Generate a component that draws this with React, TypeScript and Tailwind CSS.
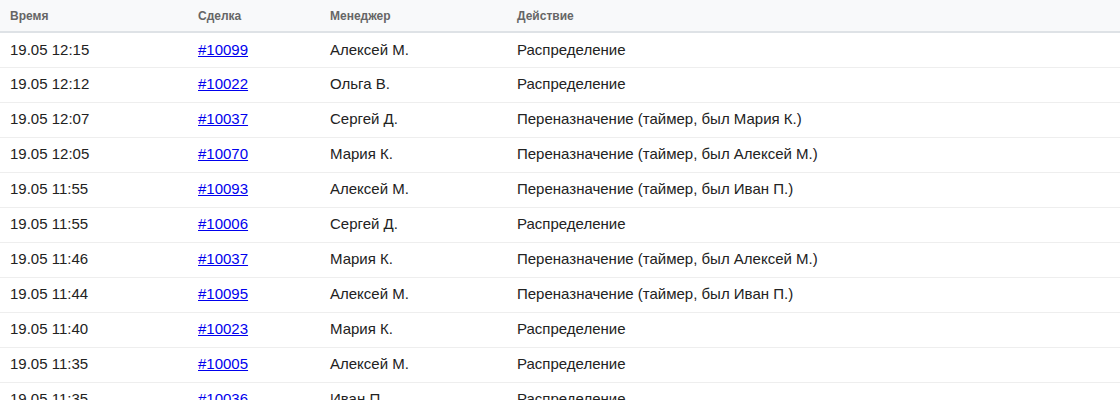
const rows: [string, string, string, string][] = [
  ['19.05 12:15', '#10099', 'Алексей М.', 'Распределение'],
  ['19.05 12:12', '#10022', 'Ольга В.', 'Распределение'],
  ['19.05 12:07', '#10037', 'Сергей Д.', 'Переназначение (таймер, был Мария К.)'],
  ['19.05 12:05', '#10070', 'Мария К.', 'Переназначение (таймер, был Алексей М.)'],
  ['19.05 11:55', '#10093', 'Алексей М.', 'Переназначение (таймер, был Иван П.)'],
  ['19.05 11:55', '#10006', 'Сергей Д.', 'Распределение'],
  ['19.05 11:46', '#10037', 'Мария К.', 'Переназначение (таймер, был Алексей М.)'],
  ['19.05 11:44', '#10095', 'Алексей М.', 'Переназначение (таймер, был Иван П.)'],
  ['19.05 11:40', '#10023', 'Мария К.', 'Распределение'],
  ['19.05 11:35', '#10005', 'Алексей М.', 'Распределение'],
  ['19.05 11:35', '#10036', 'Иван П.', 'Распределение'],
];

export default function App() {
  return (
    <div className="w-[1120px] h-[400px] overflow-hidden bg-white" style={{ fontFamily: '"Liberation Sans", Arial, sans-serif' }}>
      <table className="w-full border-collapse text-left">
        <thead>
          <tr className="bg-[#f8f9fa] border-b-2 border-[#dee2e6] text-[12px] font-bold text-[#666]">
            <th className="w-[188px] px-[10px] h-[32px]">Время</th>
            <th className="w-[132px] px-[10px]">Сделка</th>
            <th className="w-[187px] px-[10px]">Менеджер</th>
            <th className="px-[10px]">Действие</th>
          </tr>
        </thead>
        <tbody className="text-[15px] text-[#222]">
          {rows.map((r, i) => (
            <tr key={i} className="border-b border-[#eee]">
              <td className="px-[10px] h-[35px]">{r[0]}</td>
              <td className="px-[10px]"><a href="#" className="text-[#0000ee] underline">{r[1]}</a></td>
              <td className="px-[10px]">{r[2]}</td>
              <td className="px-[10px]">{r[3]}</td>
            </tr>
          ))}
        </tbody>
      </table>
    </div>
  );
}
